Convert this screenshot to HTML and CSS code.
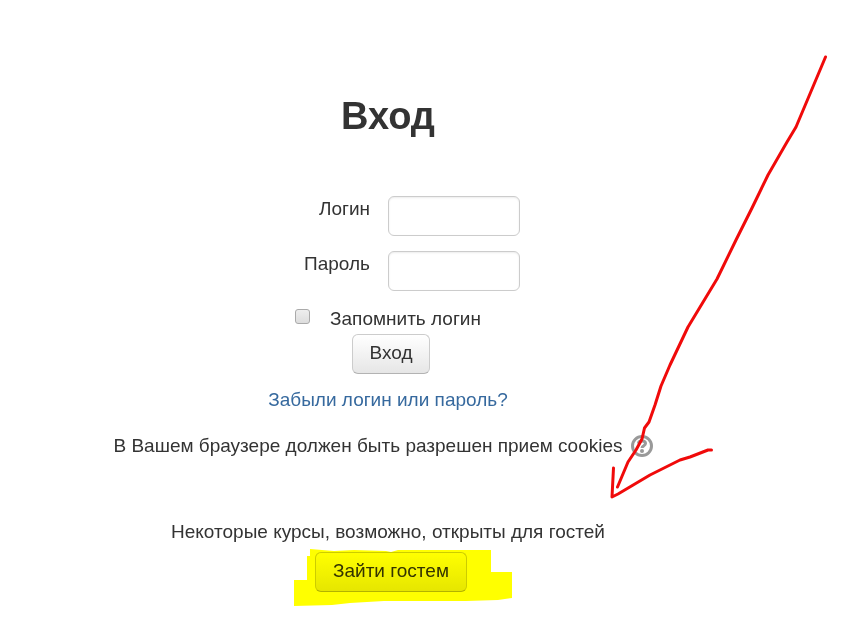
FILE: index.html
```
<!DOCTYPE html>
<html lang="ru">
  <head>
    <meta charset="UTF-8" />
    <meta name="viewport" content="width=device-width, initial-scale=1.0" />
    <title>Вход</title>
    <link rel="stylesheet" href="styles.css">
  </head>

  <body>
    <main class="login">
      <h1>Вход</h1>

      <!-- форма входа -->
      <form class="login-form" action="#" method="post">
        <div class="field">
          <label for="username">Логин</label>
          <input type="text" id="username" name="username" />
        </div>
        <div class="field">
          <label for="password">Пароль</label>
          <input type="password" id="password" name="password" />
        </div>
        <div class="remember">
          <input type="checkbox" id="remember" name="remember" />
          <label for="remember">Запомнить логин</label>
        </div>
        <button type="submit" class="btn">Вход</button>
      </form>

      <a class="forget" href="#">Забыли логин или пароль?</a>

      <div class="cookies">
        <span>В Вашем браузере должен быть разрешен прием cookies</span>
        <a href="#" class="help" aria-label="Справка">
          <svg width="22" height="22" viewBox="0 0 22 22">
            <circle cx="11" cy="11" r="9.5" fill="none" stroke="#999" stroke-width="3" />
            <path d="M7.5 8.5C7.5 5 14.5 5 14.5 8.5C14.5 10.8 11.2 10.5 11 13" fill="none" stroke="#999" stroke-width="3" />
            <circle cx="11" cy="16" r="2" fill="#999" />
          </svg>
        </a>
      </div>

      <!-- гостевой вход -->
      <p class="guest-text">Некоторые курсы, возможно, открыты для гостей</p>
      <form class="guest" action="#" method="post">
        <button type="submit" class="btn">Зайти гостем</button>
        <svg class="marker" width="220" height="60" viewBox="0 0 220 60">
          <path d="M16 0L40 2L60 1L92 2L97 3L104 1L197 1V23H218V49L204 51L172 52H90L56 54L38 56L0 57V31H13V7H16Z" fill="#ff0" />
        </svg>
      </form>

      <!-- стрелка -->
      <svg class="arrow" width="226" height="456" viewBox="0 0 226 456">
        <path d="M217.500 7L188 77L179 92L160 125L144 158L128 190L109 229L80 277L62 315L53 336L47 355L41 372L36.500 378L34 389L28 400L20 412L9.500 437M5.500 418L4 447L10 444L42 425L72 410L82 407L100 400H103.500" fill="none" stroke="#f00a0a" stroke-width="3" stroke-linecap="round" stroke-linejoin="round" />
      </svg>
    </main>
  </body>
</html>
```

FILE: styles.css
```
* {
  box-sizing: border-box;
}

body {
  margin: 0;
  background-color: #fff;
  color: #333;
  font-family: "Liberation Sans", Arial, sans-serif;
  font-size: 19px;
  line-height: 26px;
}

.login {
  position: relative;
  margin-right: 80px;
  padding: 92px 0 36px;
  text-align: center;
}

h1 {
  margin: 0 0 56px;
  font-size: 38px;
  line-height: 48px;
}

.login-form {
  display: flex;
  flex-direction: column;
  align-items: center;
}

.field {
  display: grid;
  grid-template-columns: 1fr 1fr;
  width: 100%;
  margin-bottom: 15px;
}

.field label {
  padding-right: 18px;
  text-align: right;
}

.field input {
  width: 132px;
  height: 40px;
  padding: 4px 8px;
  border: 1px solid #ccc;
  border-radius: 6px;
  background-color: #fff;
  box-shadow: inset 0 1px 2px rgba(0, 0, 0, 0.08);
  font: inherit;
}

.remember {
  display: flex;
  align-items: center;
  gap: 20px;
  margin-bottom: 2px;
}

.remember input {
  appearance: none;
  width: 15px;
  height: 15px;
  margin: 0 0 5px;
  border: 1px solid #aaa;
  border-radius: 3px;
  background-image: linear-gradient(#eee, #ddd);
}

.btn {
  height: 40px;
  margin-left: 6px;
  padding: 0 17px 2px;
  border: 1px solid #ccc;
  border-bottom-color: #b3b3b3;
  border-radius: 6px;
  background-image: linear-gradient(#fff, #e6e6e6);
  color: #333;
  font: inherit;
  cursor: pointer;
}

.forget {
  display: block;
  margin: 13px 0 20px;
  color: #36699e;
  text-decoration: none;
}

.cookies {
  display: flex;
  justify-content: center;
  align-items: center;
  gap: 8px;
  margin: 0 10px 60px 0;
}

.help {
  display: flex;
}

.guest-text {
  margin: 0 0 7px;
}

.guest {
  position: relative;
  width: fit-content;
  margin: 0 auto;
}

/* жёлтый маркер поверх кнопки */
.marker {
  position: absolute;
  top: -3px;
  left: -15px;
  mix-blend-mode: multiply;
  pointer-events: none;
}

.arrow {
  position: absolute;
  top: 50px;
  left: 50%;
  margin-left: 220px;
  pointer-events: none;
}
```
